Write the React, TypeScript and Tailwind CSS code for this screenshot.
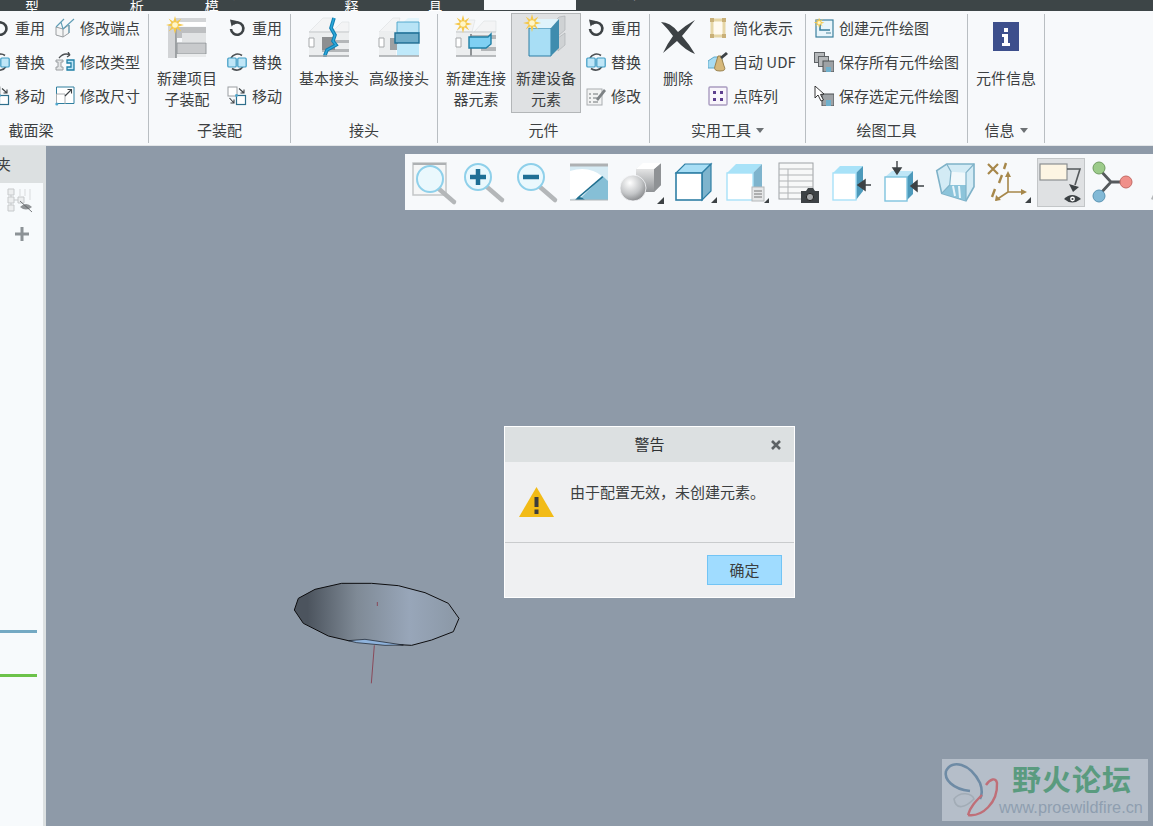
import React from 'react';

const font = { fontFamily: '"Noto Sans CJK SC", "Noto Sans", sans-serif' };

const Star = ({ x, y }: { x: number; y: number }) => (
  <g transform={`translate(${x} ${y})`}>
    <path
      d="M0-9 1.6-3.2 6.4-6.4 3.2-1.6 9 0 3.2 1.6 6.4 6.4 1.6 3.2 0 9-1.6 3.2-6.4 6.4-3.2 1.6-9 0-3.2-1.6-6.4-6.4-1.6-3.2Z"
      fill="#f5c84a"
    />
    <circle r="2.8" fill="#fff6c8" />
  </g>
);

const Reuse = () => (
  <svg viewBox="0 0 20 20" className="w-5 h-5">
    <path d="M6 6A6.2 6.2 0 1 1 4 11" fill="none" stroke="#3d4245" strokeWidth="2.6" />
    <path d="M3 1.6 10 3 4.6 8.6Z" fill="#3d4245" />
  </svg>
);

const Replace = () => (
  <svg viewBox="0 0 20 20" className="w-5 h-5">
    <path d="M4 6A7.5 7.5 0 0 1 15 3.5M16 14.5A7.5 7.5 0 0 1 5 16.5" fill="none" stroke="#4c5053" strokeWidth="1.6" />
    <rect x="0.8" y="6" width="8.4" height="9" rx="1" fill="#bfe6f7" stroke="#3f9cc4" strokeWidth="1.2" />
    <rect x="10.8" y="6" width="8.4" height="9" rx="1" fill="#bfe6f7" stroke="#3f9cc4" strokeWidth="1.2" />
  </svg>
);

const Move = () => (
  <svg viewBox="0 0 20 20" className="w-5 h-5">
    <rect x="1" y="1" width="9" height="9" fill="#fff" stroke="#9a9ea1" />
    <rect x="9.5" y="9.5" width="9" height="9" fill="#fff" stroke="#2f6f8c" strokeWidth="1.2" />
    <path d="M12 2.5 17 7M17 3.5V7H13.5M2.5 12 7 17M3.5 17H7V13.5" fill="none" stroke="#3d4245" strokeWidth="1.1" />
    <circle cx="9.5" cy="9.5" r="1.4" fill="#4fa6cc" />
  </svg>
);

const ModifyEnd = () => (
  <svg viewBox="0 0 20 20" className="w-5 h-5">
    <path d="M1 9 8 11V19L1 17ZM8 11 14 7V15L8 19" fill="#f4f5f5" stroke="#9a9ea1" strokeWidth="1" />
    <path d="M1 9 9 1M8 11 19 1M14 7V15M6 4 8 11" fill="none" stroke="#5f9db5" strokeWidth="1.1" />
  </svg>
);

const ModifyType = () => (
  <svg viewBox="0 0 20 20" className="w-5 h-5">
    <path d="M4 6Q9 0 15 3M15 3 13 0M15 3 12 5" fill="none" stroke="#4c5053" strokeWidth="1.3" />
    <path d="M1 8H8V10H6V15H8V18H1V15H3V10H1Z" fill="#e3e5e6" stroke="#9a9ea1" />
    <path d="M12 8H19V18H12V15H16V11H12Z" fill="#bfe6f7" stroke="#1f7fa5" strokeWidth="1.3" />
  </svg>
);

const ModifySize = () => (
  <svg viewBox="0 0 20 20" className="w-5 h-5">
    <path d="M1.5 18V1H19V17.5H1.5" fill="#fff" stroke="#2f7f9f" strokeWidth="1" />
    <path d="M1.5 18 1.5 8H10V18" fill="none" stroke="#a9adb0" />
    <path d="M10 10 16 4M12.5 3.5H16.5V7.5" fill="none" stroke="#3d4245" strokeWidth="1.1" />
    <circle cx="1.8" cy="18" r="1.5" fill="#4fa6cc" />
  </svg>
);

const Modify = () => (
  <svg viewBox="0 0 20 20" className="w-5 h-5">
    <rect x="1" y="3" width="15" height="16" fill="#f2f3f3" stroke="#a9adb0" />
    <path d="M3 8H5M7 8H12M3 12H5M7 12H12M3 16H5M7 16H12" stroke="#6f7477" />
    <path d="M10 13 18 3 20 5 12 15Z" fill="#7d8285" />
  </svg>
);

const Simplify = () => (
  <svg viewBox="0 0 20 20" className="w-5 h-5">
    <path d="M4 2H16V18H4Z" fill="#fffaf0" stroke="#e6d6a6" strokeWidth="3" />
    <path d="M2 0H6V4H2ZM14 0H18V4H14ZM2 16H6V20H2ZM14 16H18V20H14Z" fill="#c9b078" />
  </svg>
);

const AutoUdf = () => (
  <svg viewBox="0 0 20 20" className="w-5 h-5">
    <path d="M0 9 6 5H14V16H0Z" fill="#a8dcf2" stroke="#5ea9c9" />
    <path d="M10 4 7 14Q5 19 12 19 19 19 16 14L13 4Z" fill="#d6b87a" stroke="#9a8350" />
    <path d="M12 5 18 0 20 2 14 7Z" fill="#3d4245" />
  </svg>
);

const PointArray = () => (
  <svg viewBox="0 0 20 20" className="w-5 h-5">
    <rect x="1" y="1" width="18" height="18" rx="1" fill="#f8f5fb" stroke="#a99cc0" strokeWidth="1.4" />
    <path d="M5 5H8V8H5ZM12 5H15V8H12ZM5 12H8V15H5ZM12 12H15V15H12Z" fill="#5d3f8e" />
  </svg>
);

const NewDrawing = () => (
  <svg viewBox="0 0 20 20" className="w-5 h-5">
    <rect x="2" y="2" width="17" height="17" fill="#e8f5fb" stroke="#3a7f9d" strokeWidth="1.2" />
    <path d="M6 5V12H16" fill="none" stroke="#3a7f9d" strokeWidth="1.6" />
    <path d="M12 15H17" stroke="#7ea9ba" strokeWidth="1.5" />
    <g transform="translate(1.5 0.5) scale(0.6)"><Star x={6} y={7} /></g>
  </svg>
);

const SaveAll = () => (
  <svg viewBox="0 0 20 20" className="w-5 h-5">
    <rect x="0.5" y="0.5" width="10" height="10" fill="#b5b8ba" stroke="#5f6366" />
    <rect x="4.5" y="4.5" width="10" height="10" fill="#b5b8ba" stroke="#5f6366" />
    <rect x="9" y="9" width="11" height="11" fill="#9ea2a5" stroke="#4c5053" />
    <rect x="12" y="15" width="5" height="5" fill="#6fb0cc" />
  </svg>
);

const SaveSelected = () => (
  <svg viewBox="0 0 20 20" className="w-5 h-5">
    <rect x="8" y="8" width="12" height="12" fill="#9ea2a5" stroke="#4c5053" />
    <rect x="12" y="14" width="5" height="6" fill="#6fb0cc" />
    <path d="M1 0V12L4 9 7 15 9.5 14 6.5 8.5 10 8Z" fill="#fff" stroke="#222" strokeWidth="0.9" />
  </svg>
);

const Beam = ({ children }: { children?: React.ReactNode }) => (
  <svg viewBox="0 0 42 42" className="w-[42px] h-[42px] overflow-visible">
    {children}
  </svg>
);

const NewSub = () => (
  <Beam>
    <path d="M2 42V10L10 2H40V6H12L10 10V42Z" fill="#d2d4d6" />
    <path d="M10 10V42" stroke="#8f9396" strokeWidth="1.6" />
    <path d="M12 6H40V10H12Z" fill="#fff" />
    <path d="M11 11H40V17H16V22H11Z" fill="#bdbfc1" />
    <path d="M16 17H40V26H16Z" fill="#e1e3e4" />
    <path d="M11 27H40V38H11Z" fill="#c8cacc" stroke="#8f9396" strokeWidth="0.9" />
    <path d="M11 38H40V41H11Z" fill="#e9ebec" />
    <Star x={9} y={9} />
  </Beam>
);

const BasicJoint = () => (
  <Beam>
    <path d="M1 16 15 2H26L22 16ZM24 16 34 6H41V16Z" fill="#f3f4f5" stroke="#dcdfe0" strokeWidth="0.6" />
    <path d="M1 16H41V40H1Z" fill="#eceeef" />
    <path d="M1 16H41" stroke="#c5c8ca" />
    <path d="M1 22H6V31H1Z" fill="#fff" stroke="#a6a9ab" />
    <path d="M14 24H41V27H14ZM14 33H41V36H14Z" fill="#b4b7b9" />
    <path d="M14 21H27V34H14Z" fill="#8d8f91" />
    <path d="M26 2 23 12 27 19 25 25 28 29 19 34 17 39 17 41" fill="none" stroke="#137fb0" strokeWidth="3.6" />
    <path d="M26 2 23 12 27 19 25 25 28 29 19 34 17 39" fill="none" stroke="#2ba9dc" strokeWidth="1.4" />
    <path d="M1 40H41" stroke="#a6a9ab" strokeWidth="1.6" />
  </Beam>
);

const AdvJoint = () => (
  <Beam>
    <path d="M1 16 15 2H22L18 16Z" fill="#f3f4f5" stroke="#dcdfe0" strokeWidth="0.6" />
    <path d="M20 11 30 2H41V11Z" fill="#e3f5fc" />
    <path d="M1 16H18V40H1Z" fill="#eceeef" />
    <path d="M1 22H6V31H1Z" fill="#fff" stroke="#a6a9ab" />
    <path d="M12 22H20V34H12Z" fill="#9ea1a3" />
    <path d="M19 6H41V17H19Z" fill="#b8e4f6" stroke="#4aa3c8" strokeWidth="0.9" />
    <path d="M17 17H41V27H17Z" fill="#6fadc9" stroke="#1f6f95" strokeWidth="1.4" />
    <path d="M19 28H41V40H19Z" fill="#bfe9fa" />
    <path d="M1 40H41" stroke="#a6a9ab" strokeWidth="1.6" />
  </Beam>
);

const NewConnector = () => (
  <Beam>
    <path d="M1 16 13 4H20L17 16ZM19 16 29 5H41V16Z" fill="#f3f4f5" stroke="#dcdfe0" strokeWidth="0.6" />
    <path d="M1 16H41V40H1Z" fill="#eceeef" />
    <path d="M1 16H41" stroke="#c5c8ca" />
    <path d="M1 22H6V31H1Z" fill="#fff" stroke="#a6a9ab" />
    <path d="M16 19H41V23H16ZM26 31H41V35H26Z" fill="#b4b7b9" />
    <path d="M16 18V40" stroke="#8f9396" strokeWidth="2" />
    <path d="M14 21H33L36 18V28L31 32H14Z" fill="#7fd0f3" stroke="#1f7fa5" strokeWidth="1.4" />
    <path d="M1 40H41" stroke="#a6a9ab" strokeWidth="1.6" />
    <Star x={8} y={8} />
  </Beam>
);

const NewDevice = () => (
  <Beam>
    <path d="M27 8 34 1 40 0V14L33 20ZM33 22 40 17V29L33 35Z" fill="#cfd2d4" stroke="#a9adb0" strokeWidth="0.6" />
    <path d="M4 12H26V40H4Z" fill="#a8def5" stroke="#2e7fa5" strokeWidth="1" />
    <path d="M4 12 12 3H34L26 12Z" fill="#dff3fb" />
    <path d="M26 12 34 3V32L26 40Z" fill="#3f8cae" />
    <Star x={7} y={7} />
  </Beam>
);

const Del = () => (
  <svg viewBox="0 0 36 36" className="w-[36px] h-[36px]">
    <path d="M1 3Q10 3 18 13 26 6 35 1 28 10 22 17 29 25 35 35 25 31 17 22 9 29 3 34 7 25 13 17 8 10 1 3Z" fill="#3d4245" />
  </svg>
);

const Info = () => (
  <svg viewBox="0 0 26 30" className="w-[26px] h-[30px]">
    <rect width="26" height="29" fill="#3d4f8c" />
    <path d="M11 6H15V10H11ZM9 12H15V21H17V24H9V21H11V15H9Z" fill="#fff" />
  </svg>
);

const Mag = ({ sign }: { sign?: 'plus' | 'minus' }) => (
  <>
    <path d="M23 26 38 39" stroke="#b4b7b9" strokeWidth="4.5" strokeLinecap="round" />
    <circle cx="14" cy="16" r="13" fill="#eaf8fd" stroke="#8fd0ea" strokeWidth="2" />
    {sign && <path d="M6 16H22" stroke="#1f6f95" strokeWidth="4.5" />}
    {sign === 'plus' && <path d="M14 8V24" stroke="#1f6f95" strokeWidth="4.5" />}
  </>
);

const T = ({ children }: { children: React.ReactNode }) => (
  <svg viewBox="0 0 42 42" className="w-[42px] h-[42px] overflow-visible">
    {children}
  </svg>
);

const tools: React.ReactNode[] = [
  <T>
    <defs>
      <radialGradient id="ball" cx="0.38" cy="0.3" r="0.8">
        <stop offset="0" stopColor="#ffffff" />
        <stop offset="0.55" stopColor="#c4c6c8" />
        <stop offset="1" stopColor="#77797c" />
      </radialGradient>
      <linearGradient id="blok" x1="0" y1="0" x2="0" y2="1">
        <stop offset="0" stopColor="#fafafa" />
        <stop offset="1" stopColor="#8f9295" />
      </linearGradient>
    </defs>
    <rect x="1" y="2" width="33" height="32" fill="#f5f6f6" stroke="#c3c6c8" strokeWidth="1.5" />
    <path d="M1 3H34" stroke="#aeb1b3" strokeWidth="2" />
    <g transform="translate(4 2)"><Mag /></g>
  </T>,
  <T><Mag sign="plus" /></T>,
  <T><Mag sign="minus" /></T>,
  <T>
    <rect x="1" y="3" width="38" height="36" fill="#d6ebf4" />
    <path d="M1 10Q20 4 34 15.7L8.7 37 1 38Z" fill="#fff" />
    <path d="M33.7 15 39 20V39H10Z" fill="#86bfd6" />
    <path d="M1 4H39" stroke="#aeb1b3" strokeWidth="3" />
    <path d="M8.7 37 33.7 15.7" stroke="#1f6f8f" strokeWidth="1.6" />
    <path d="M6 39Q10 33 16 39Z" fill="#1f6f8f" />
    <path d="M1 39H39" stroke="#b4b7b9" />
  </T>,
  <T>
    <path d="M15 8 22 2H40V24L33 31H15Z" fill="url(#blok)" />
    <path d="M33 8 40 2V24L33 31Z" fill="#8f9295" />
    <path d="M15 8 22 2H40L33 8Z" fill="#ffffff" />
    <circle cx="12" cy="27" r="13" fill="url(#ball)" stroke="#f7f9fb" strokeWidth="0.8" />
    <path d="M36 43H43V36Z" fill="#3d4245" />
  </T>,
  <T>
    <path d="M2 12 11 3H37L28 12Z" fill="#a8def5" stroke="#2f7fa5" strokeWidth="1.2" />
    <path d="M28 12 37 3V30L28 39Z" fill="#7eb4cd" stroke="#2f7fa5" strokeWidth="1.2" />
    <rect x="2" y="12" width="26" height="27" fill="#fff" stroke="#2f7fa5" strokeWidth="1.6" />
    <path d="M37 42 43 42 43 36Z" fill="#3d4245" />
  </T>,
  <T>
    <path d="M1 12 10 3H36L27 12Z" fill="#a8e2f8" />
    <path d="M27 12 36 3V30L27 39Z" fill="#7eb4cd" />
    <rect x="1" y="12" width="26" height="27" fill="#fff" stroke="#a8e2f8" strokeWidth="1.4" />
    <rect x="26" y="26" width="12" height="14" fill="#e6e7e8" stroke="#b5b8ba" />
    <path d="M28 30H36M28 33H36M28 36H36" stroke="#777" />
    <path d="M38 42 43 42 43 37Z" fill="#3d4245" />
  </T>,
  <T>
    <rect x="1" y="2" width="34" height="36" fill="#f7f8f8" stroke="#9ea2a5" />
    <path d="M1 8H35M1 14H35M1 20H35M1 26H35M1 32H25M10 8V38" stroke="#b1b4b6" />
    <path d="M23 30H28L30 27H35L37 30H41V42H23Z" fill="#3d4245" />
    <circle cx="32" cy="36" r="3.6" fill="#a6a9ab" stroke="#222" />
  </T>,
  <T>
    <path d="M2 12 9 5H32L25 12Z" fill="#a8e2f8" />
    <path d="M25 12 32 5V30L25 39Z" fill="#4d9abb" />
    <rect x="2" y="12" width="23" height="27" fill="#fff" stroke="#a8e2f8" strokeWidth="1.4" />
    <path d="M28 24H40M34 19 27 24 34 29Z" fill="#3d4245" stroke="#3d4245" strokeWidth="1.5" />
  </T>,
  <T>
    <path d="M2 16 9 10H30L24 16Z" fill="#bfe6f7" />
    <path d="M24 16 30 10V33L24 39Z" fill="#4d9abb" />
    <rect x="2" y="16" width="22" height="24" fill="#fff" stroke="#7fc4de" strokeWidth="1.4" />
    <path d="M14 0V9M10 7H18L14 13Z" fill="#3d4245" stroke="#3d4245" strokeWidth="1.4" />
    <path d="M28 25H41M34 20 28 25 34 30Z" fill="#3d4245" stroke="#3d4245" strokeWidth="1.5" />
  </T>,
  <T>
    <path d="M1.7 9.7 11.7 3H39V25.7L31 39.7 6.7 32.3Z" fill="#d3ebf5" stroke="#7fb2c8" strokeWidth="1.6" />
    <path d="M16 10.7 31 11.7V24H14.7Z" fill="#f1f8fb" />
    <path d="M14.7 24H31V39.7L6.7 32.3Z" fill="#8cc4da" />
    <path d="M11.7 3 16 10.7 14.7 24 6.7 32.3M39 3 31 11.7V39.7" fill="none" stroke="#7fb2c8" strokeWidth="1.2" />
    <path d="M18 25 20 35M24 25 25 37" stroke="#e6f4fa" strokeWidth="2" />
  </T>,
  <T>
    <path d="M1 3 11 13M11 3 1 13" stroke="#a6874a" strokeWidth="2.2" />
    <path d="M19 2 17 8M15 14 12 22M8 28 5 36" stroke="#a6874a" strokeWidth="2.4" />
    <path d="M21 12V31M21 31H37M21 31 9 39" stroke="#a6874a" strokeWidth="1.6" />
    <path d="M18 16 21 10 24 16ZM34 28 40 31 34 34ZM9 34 8 40 14 39Z" fill="#a6874a" />
    <path d="M38 42 44 42 44 36Z" fill="#3d4245" />
  </T>,
  <T>
    <rect x="0" y="3" width="27" height="16" fill="#fdf5e3" stroke="#8c8f91" strokeWidth="1.2" />
    <path d="M27 8H40L35 24" fill="none" stroke="#55595c" strokeWidth="1.6" />
    <path d="M29 23 39 26 33 31Z" fill="#3d4245" />
    <path d="M24 38Q32 30 41 38 32 45 24 38Z" fill="#3d4245" />
    <circle cx="32.5" cy="38" r="2.4" fill="#fff" />
    <circle cx="32.5" cy="38" r="1.1" fill="#3d4245" />
  </T>,
  <T>
    <path d="M7 8 19 21 7 34M19 21H32" fill="none" stroke="#55595c" strokeWidth="2.8" />
    <circle cx="7" cy="7" r="6" fill="#9ccb8a" stroke="#6f9c60" />
    <circle cx="7" cy="35" r="6" fill="#82b9d6" stroke="#5a94b3" />
    <circle cx="34" cy="21" r="6" fill="#f0908a" stroke="#c46a64" />
  </T>,
  <T>
    <path d="M7 38 18 14Q23 8 25 14V38Q16 42 7 38Z" fill="#b1b4b6" />
  </T>,
];

const Small = ({ icon, label }: { icon: React.ReactNode; label: string }) => (
  <div className="flex items-center h-[30px] gap-[5px] whitespace-nowrap">
    <span className="w-5 h-5 shrink-0">{icon}</span>
    <span>{label}</span>
  </div>
);

const Col = ({ children }: { children: React.ReactNode }) => (
  <div className="flex flex-col gap-[4px] -mt-[1px]">{children}</div>
);

const Large = ({ icon, lines, active, w = 'w-[70px]' }: { icon: React.ReactNode; lines: string[]; active?: boolean; w?: string }) => (
  <div
    className={
      'flex flex-col items-center shrink-0 h-[100px] -mt-[1px] pt-[2px] border ' +
      w +
      (active ? ' bg-[#dfe1e3] border-[#b3b6b8]' : ' border-transparent')
    }
  >
    <div className="h-[42px] flex items-center justify-center">{icon}</div>
    <div className="mt-[9px] text-center leading-[21px] whitespace-nowrap">
      {lines.map((l) => (
        <div key={l}>{l}</div>
      ))}
    </div>
  </div>
);

const Group = ({ w, label, caret, className, children }: { w: string; label: string; caret?: boolean; className?: string; children: React.ReactNode }) => (
  <div className={'flex flex-col shrink-0 h-[129px] mt-[3px] border-r border-[#b9bec2] ' + w}>
    <div className={'flex h-[106px] ' + (className || '')}>{children}</div>
    <div className="h-[20px] flex items-center justify-center gap-[5px] whitespace-nowrap">
      {label}
      {caret && <span className="w-0 h-0 border-x-[4px] border-x-transparent border-t-[5px] border-t-[#6d7174]" />}
    </div>
  </div>
);

export default function App() {
  return (
    <div className="w-[1153px] h-[826px] overflow-hidden flex flex-col bg-[#8e9aa8] text-[15px] text-[#3c3f41]" style={font}>
      {/* tab strip, only the feet of the labels are on screen */}
      <div className="h-[11px] bg-[#3d4547] flex overflow-hidden text-white text-[14px] leading-[14px] shrink-0">
        <div className="w-[484px] shrink-0 flex -mt-[15px] pl-[25px]">
          <span className="mr-[77px]">模型</span>
          <span className="mr-[47px]">分析</span>
          <span className="mr-[84px]">柔性建模</span>
          <span className="mr-[56px]">注释</span>
          <span>渲染工具</span>
        </div>
        <div className="w-[92px] shrink-0 bg-[#f7f9fb] text-[#3c3f41] h-[10px] overflow-hidden">
          <div className="-mt-[15px] text-center">框架</div>
        </div>
        <div className="flex -mt-[15px] pl-[27px]">
          <span className="mr-[85px]">应用程序</span>
          <span>视图</span>
        </div>
      </div>

      {/* ribbon */}
      <div className="h-[134px] bg-[#f7f9fb] flex overflow-hidden shrink-0">
        <Group w="w-[235px] -ml-[86px]" label="截面梁" className="pl-[76px] gap-[10px]">
          <Col>
            <Small icon={<Reuse />} label="重用" />
            <Small icon={<Replace />} label="替换" />
            <Small icon={<Move />} label="移动" />
          </Col>
          <Col>
            <Small icon={<ModifyEnd />} label="修改端点" />
            <Small icon={<ModifyType />} label="修改类型" />
            <Small icon={<ModifySize />} label="修改尺寸" />
          </Col>
        </Group>
        <Group w="w-[142px]" label="子装配" className="pl-[3px] gap-[5px]">
          <Large icon={<NewSub />} lines={['新建项目', '子装配']} />
          <Col>
            <Small icon={<Reuse />} label="重用" />
            <Small icon={<Replace />} label="替换" />
            <Small icon={<Move />} label="移动" />
          </Col>
        </Group>
        <Group w="w-[147px]" label="接头" className="pl-[3px]">
          <Large icon={<BasicJoint />} lines={['基本接头']} />
          <Large icon={<AdvJoint />} lines={['高级接头']} />
        </Group>
        <Group w="w-[212px]" label="元件" className="pl-[3px]">
          <Large icon={<NewConnector />} lines={['新建连接', '器元素']} />
          <Large icon={<NewDevice />} lines={['新建设备', '元素']} active />
          <div className="ml-[5px]">
            <Col>
              <Small icon={<Reuse />} label="重用" />
              <Small icon={<Replace />} label="替换" />
              <Small icon={<Modify />} label="修改" />
            </Col>
          </div>
        </Group>
        <Group w="w-[156px]" label="实用工具" caret className="pl-[5px] gap-[7px]">
          <Large icon={<Del />} lines={['删除']} w="w-[46px]" />
          <Col>
            <Small icon={<Simplify />} label="简化表示" />
            <Small icon={<AutoUdf />} label="自动 UDF" />
            <Small icon={<PointArray />} label="点阵列" />
          </Col>
        </Group>
        <Group w="w-[162px]" label="绘图工具" className="pl-[8px]">
          <Col>
            <Small icon={<NewDrawing />} label="创建元件绘图" />
            <Small icon={<SaveAll />} label="保存所有元件绘图" />
            <Small icon={<SaveSelected />} label="保存选定元件绘图" />
          </Col>
        </Group>
        <Group w="w-[77px]" label="信息" caret className="pl-[3px]">
          <Large icon={<Info />} lines={['元件信息']} />
        </Group>
      </div>

      <div className="flex-1 flex min-h-0 border-t border-[#e3e6e8]">
        {/* side panel */}
        <div className="w-[46px] shrink-0 flex flex-col bg-[#dce0e1] overflow-hidden">
          <div className="h-[37px] flex items-center -ml-[4px] shrink-0">夹</div>
          <div className="w-[43px] flex-1 bg-[#f7fafc] flex flex-col">
            <svg viewBox="0 0 26 25" className="w-[26px] h-[25px] ml-[7px] mt-[5px]">
              <path d="M1 1H7V7H1ZM1 9H7V15H1ZM1 17H7V23H1ZM11 9H17V15H11ZM4 7V9M4 15V17M7 12H11" fill="#eceeef" stroke="#c6c9cb" />
              <path d="M13 1V8M18 1V8M23 1V12" stroke="#d9dbdd" />
              <path d="M13 19Q19 13 25 19 19 24 13 19Z" fill="#8f9396" />
              <path d="M13 13 25 24" stroke="#55595c" strokeWidth="0.8" />
            </svg>
            <svg viewBox="0 0 14 14" className="w-[14px] h-[14px] ml-[15px] mt-[14px]">
              <path d="M5.5 0H8.5V5.5H14V8.5H8.5V14H5.5V8.5H0V5.5H5.5Z" fill="#8c9296" />
            </svg>
            <div className="w-[37px] h-[3px] bg-[#74a9c3] mt-[389px]" />
            <div className="w-[37px] h-[3px] bg-[#6cc24a] mt-[41px]" />
          </div>
        </div>

        <div className="flex-1" />
      </div>

      {/* floating view toolbar */}
      <div className="absolute left-[405px] top-[154px] w-[748px] h-[56px] bg-[#f7f9fb] flex items-center pl-[2px] overflow-hidden">
        {tools.map((t, i) => (
          <div key={i} className="w-[52.3px] h-[56px] shrink-0 flex items-center justify-center relative">
            {i === 12 && <div className="absolute left-[2px] top-[4px] w-[48px] h-[49px] bg-[#dfe1e3] border border-[#c3c6c8]" />}
            <div className="relative">{t}</div>
          </div>
        ))}
      </div>

      {/* model on the canvas */}
      <svg viewBox="0 0 555 375" className="absolute left-[285px] top-[570px] w-[185px] h-[125px]">
        <defs>
          <linearGradient id="disc" x1="0" x2="1" y1="0" y2="0">
            <stop offset="0.08" stopColor="#4c545e" />
            <stop offset="0.38" stopColor="#7f8a96" />
            <stop offset="0.7" stopColor="#98a6b9" />
            <stop offset="0.95" stopColor="#8d9aa9" />
          </linearGradient>
        </defs>
        <path
          d="M28 120 40 85 90 58 170 40H260L340 47 420 68 490 100 522 145 505 185 440 210 380 226 300 222 190 212 130 198 55 160Z"
          fill="url(#disc)"
          stroke="#0d0d0f"
          strokeWidth="3"
        />
        <path d="M190 212 240 208 355 225 300 226 215 218Z" fill="#8fb3dc" stroke="#10151c" strokeWidth="2" />
        <path d="M268 226 259 340M277 96V108" stroke="#8a4a5a" strokeWidth="3" fill="none" />
      </svg>

      {/* warning dialog */}
      <div className="absolute left-[504px] top-[426px] w-[291px] h-[172px] bg-[#eff0f2] border border-white flex flex-col">
        <div className="h-[35px] bg-[#dce0e1] flex items-center justify-center relative shrink-0 text-[#2f3234]">
          警告
          <svg viewBox="0 0 10 10" className="absolute right-[13px] top-[13px] w-[10px] h-[10px]">
            <path d="M1 1 9 9M9 1 1 9" stroke="#5d6265" strokeWidth="2.6" />
          </svg>
        </div>
        <div className="h-[81px] flex items-start pl-[14px] border-b border-[#c9cbcd] shrink-0">
          <svg viewBox="0 0 35 31" className="w-[35px] h-[31px] mt-[25px] shrink-0">
            <path d="M17.5 0 35 30H0Z" fill="#f2bb17" />
            <path d="M15.5 10H19.5V20H15.5ZM15.5 22.5H19.5V27H15.5Z" fill="#3d3d3d" />
          </svg>
          <span className="ml-[16px] mt-[19px] leading-[22px] whitespace-nowrap">由于配置无效，未创建元素。</span>
        </div>
        <div className="flex justify-end pr-[12px] pt-[12px]">
          <div className="w-[75px] h-[30px] bg-[#a0dcff] border border-[#72c4f5] flex items-center justify-center">确定</div>
        </div>
      </div>

      {/* forum watermark */}
      <div className="absolute left-[942px] top-[759px] w-[206px] h-[62px] bg-[#b5bec9] overflow-hidden">
        <svg viewBox="0 0 60 62" className="absolute left-0 top-0 w-[60px] h-[62px]">
          <path d="M4 12C10 0 28 4 38 24 41 32 40 36 38 40M4 12C2 20 10 30 28 32" fill="none" stroke="#6e8ba5" strokeWidth="2.6" />
          <path d="M26 56C40 58 56 44 55 24 54 18 48 20 44 26M26 56C28 48 34 42 40 36" fill="none" stroke="#bf6f78" strokeWidth="2.4" />
          <path d="M12 40C18 32 30 34 32 40 24 48 14 52 12 40Z" fill="none" stroke="#a2acb6" strokeWidth="1.6" />
        </svg>
        <div className="absolute left-[70px] top-[0px] text-[29px] leading-[38px] font-bold tracking-[1px] text-[#5a9b7f] whitespace-nowrap">
          野火论坛
        </div>
        <div className="absolute left-[57px] top-[38px] text-[16.3px] leading-[20px] text-[#8f9eb0] whitespace-nowrap" style={{ fontFamily: '"Liberation Sans", sans-serif' }}>
          www.proewildfire.cn
        </div>
      </div>
    </div>
  );
}
